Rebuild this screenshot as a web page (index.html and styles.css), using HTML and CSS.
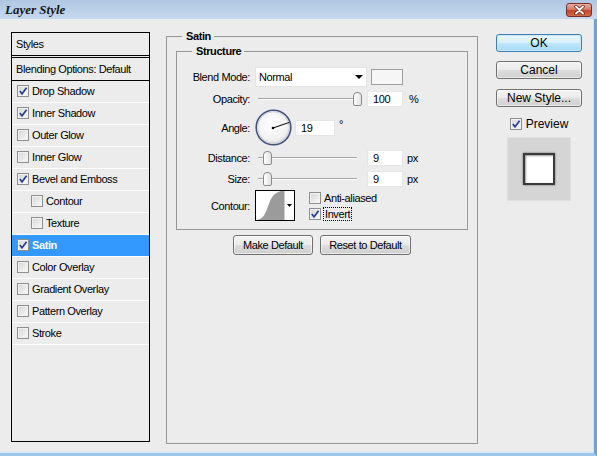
FILE: index.html
```html
<!DOCTYPE html>
<html>
<head>
<meta charset="utf-8">
<title>Layer Style</title>
<link rel="stylesheet" href="styles.css">
</head>
<body>
<div class="window">
  <div class="titlebar">
    <span class="title">Layer Style</span>
    <span class="close">
      <svg width="13" height="10" viewBox="0 0 13 10"><path d="M3 1.5 L10 8.5 M10 1.5 L3 8.5" stroke="#6b2218" stroke-width="3.4" stroke-linecap="round"/><path d="M3 1.5 L10 8.5 M10 1.5 L3 8.5" stroke="#ffffff" stroke-width="1.9" stroke-linecap="round"/></svg>
    </span>
  </div>
  <div class="body">
    <div class="styles">
      <div class="list-head">Styles</div>
      <div class="list-blend">Blending Options: Default</div>
      <div class="item"><span class="cb"><svg viewBox="0 0 10 10"><path d="M1.8 5 L4 7.8 L8.6 1.8"/></svg></span>Drop Shadow</div>
      <div class="item"><span class="cb"><svg viewBox="0 0 10 10"><path d="M1.8 5 L4 7.8 L8.6 1.8"/></svg></span>Inner Shadow</div>
      <div class="item"><span class="cb"></span>Outer Glow</div>
      <div class="item"><span class="cb"></span>Inner Glow</div>
      <div class="item"><span class="cb"><svg viewBox="0 0 10 10"><path d="M1.8 5 L4 7.8 L8.6 1.8"/></svg></span>Bevel and Emboss</div>
      <div class="item sub"><span class="cb"></span>Contour</div>
      <div class="item sub"><span class="cb"></span>Texture</div>
      <div class="item active"><span class="cb"><svg viewBox="0 0 10 10"><path d="M1.8 5 L4 7.8 L8.6 1.8"/></svg></span>Satin</div>
      <div class="item"><span class="cb"></span>Color Overlay</div>
      <div class="item"><span class="cb"></span>Gradient Overlay</div>
      <div class="item"><span class="cb"></span>Pattern Overlay</div>
      <div class="item"><span class="cb"></span>Stroke</div>
    </div>

    <div class="group satin">
      <div class="legend">Satin</div>
      <div class="group structure">
        <div class="legend">Structure</div>
        <div class="rows">
          <div class="row r-blend">
            <span class="lbl">Blend Mode:</span>
            <div class="select"><span>Normal</span><span class="arrow"></span></div>
            <span class="swatch"></span>
          </div>
          <div class="row r-opacity">
            <span class="lbl">Opacity:</span>
            <div class="slider"><span class="track"></span><span class="thumb" style="left:98px"></span></div>
            <span class="num">100</span>
            <span class="unit">%</span>
          </div>
          <div class="row r-angle">
            <span class="lbl">Angle:</span>
            <svg class="dial" width="37" height="37" viewBox="0 0 37 37">
              <defs>
                <radialGradient id="dg" cx="0.45" cy="0.4" r="0.6">
                  <stop offset="0" stop-color="#ffffff"/>
                  <stop offset="0.75" stop-color="#f1f1f1"/>
                  <stop offset="1" stop-color="#dadada"/>
                </radialGradient>
              </defs>
              <circle cx="18.5" cy="18.5" r="17.3" fill="url(#dg)" stroke="#44527a" stroke-width="1.6"/>
              <circle cx="18.5" cy="18.5" r="15.8" fill="none" stroke="#c6cddb" stroke-width="0.9"/>
              <path d="M18 19 L34 13.5" stroke="#000" stroke-width="1"/>
              <circle cx="18" cy="19" r="1.3" fill="#000"/>
            </svg>
            <span class="num wide">19</span>
            <span class="deg">°</span>
          </div>
          <div class="row r-distance">
            <span class="lbl">Distance:</span>
            <div class="slider"><span class="track"></span><span class="thumb" style="left:8px"></span></div>
            <span class="num">9</span>
            <span class="unit px">px</span>
          </div>
          <div class="row r-size">
            <span class="lbl">Size:</span>
            <div class="slider"><span class="track"></span><span class="thumb" style="left:8px"></span></div>
            <span class="num">9</span>
            <span class="unit px">px</span>
          </div>
          <div class="row r-contour">
            <span class="lbl">Contour:</span>
            <svg class="contour" width="40" height="31" viewBox="0 0 40 31">
              <rect x="0.5" y="0.5" width="39" height="30" fill="#fff" stroke="#000"/>
              <path d="M2 30 C 9 29 11 22 13.5 15 C 16 8 19 2 27 1 L29.5 1 L29.5 30 Z" fill="#9b9b9b"/>
              <path d="M32 14 L37 14 L34.5 17 Z" fill="#000"/>
            </svg>
            <div class="opts">
              <div class="opt"><span class="cb"></span>Anti-aliased</div>
              <div class="opt"><span class="cb"><svg viewBox="0 0 10 10"><path d="M1.8 5 L4 7.8 L8.6 1.8"/></svg></span><span class="focus">Invert</span></div>
            </div>
          </div>
        </div>
      </div>
      <div class="btn-row">
        <span class="btn mk">Make Default</span>
        <span class="btn rs">Reset to Default</span>
      </div>
    </div>

    <div class="side">
      <span class="btn big ok">OK</span>
      <span class="btn big cancel">Cancel</span>
      <span class="btn big newstyle">New Style...</span>
      <div class="pv"><span class="cb"><svg viewBox="0 0 10 10"><path d="M1.8 5 L4 7.8 L8.6 1.8"/></svg></span>Preview</div>
      <div class="pvbox"><div class="pvsq"></div></div>
    </div>
  </div>
</div>
</body>
</html>
```

FILE: styles.css
```css
* { box-sizing: border-box; }
html, body { margin: 0; padding: 0; }
body {
  width: 597px;
  height: 456px;
  overflow: hidden;
  background: #ececec;
  font-family: "Liberation Sans", Arial, sans-serif;
  font-size: 11px;
  letter-spacing: -0.4px;
  color: #000;
}

.window {
  width: 597px;
  height: 456px;
  display: flex;
  flex-direction: column;
  background: #ececec;
}

/* title bar */
.titlebar {
  height: 19px;
  flex: none;
  display: flex;
  align-items: center;
  justify-content: space-between;
  padding: 0 5px 0 5px;
  background: linear-gradient(#afc7e3, #c6d8ed);
}
.title {
  font-family: "Liberation Serif", "Times New Roman", serif;
  font-style: italic;
  font-weight: bold;
  font-size: 13px;
  letter-spacing: 0;
  color: #161616;
}
.close {
  width: 26px;
  height: 14px;
  border: 1px solid #7b2c22;
  border-radius: 3px;
  background: linear-gradient(#eab1a4, #d97a63 45%, #c4452d 55%, #d2694b);
  display: flex;
  align-items: center;
  justify-content: center;
}

/* body */
.body {
  flex: 1;
  display: flex;
  align-items: flex-start;
  padding-left: 11px;
  border-right: 3px solid #62a9e4;
  border-bottom: 3px solid #9cc7ea;
  box-shadow: inset -1px 0 0 #d2e3f2, inset 0 -2px 0 #dae7f3;
}

/* styles list */
.styles {
  margin-top: 13px;
  width: 139px;
  height: 410px;
  border: 1px solid #000;
  flex: none;
}
.list-head {
  height: 25px;
  border-bottom: 3px double #000;
  padding: 0 0 1px 4px;
  display: flex;
  align-items: center;
}
.list-blend {
  height: 23px;
  border-bottom: 1px solid #000;
  padding: 0 0 1px 4px;
  display: flex;
  align-items: center;
}
.item {
  height: 22px;
  border-bottom: 1px solid #fff;
  display: flex;
  align-items: center;
  padding: 0 0 1px 5px;
}
.item.sub { padding-left: 19px; }
.item .cb { margin-right: 3px; }
.item.active {
  background: #3399ff;
  color: #fff;
  font-weight: bold;
}

/* checkbox */
.cb {
  width: 12px;
  height: 12px;
  flex: none;
  border: 1px solid #8e8f8f;
  background: linear-gradient(135deg, #d6d6d6, #f9f9f9);
  box-shadow: inset 0 0 0 1px #f2f2f2;
  display: flex;
  align-items: center;
  justify-content: center;
}
.cb svg {
  width: 10px;
  height: 10px;
  fill: none;
  stroke: #26418f;
  stroke-width: 1.7;
}

/* group boxes */
.group {
  border: 1px solid #969696;
}
.legend {
  display: block;
  width: max-content;
  height: 13px;
  line-height: 13px;
  margin: -7px 0 0 15px;
  padding: 0 3px 0 4px;
  background: #ececec;
  font-weight: bold;
}
.satin {
  margin-left: 16px;
  margin-top: 17px;
  width: 312px;
  height: 408px;
  flex: none;
}
.structure {
  margin: 8px 9px 0 9px;
  padding-bottom: 8px;
}
.rows { padding-top: 9px; }

.row {
  display: flex;
  align-items: center;
}
.lbl {
  width: 73px;
  margin-right: 5px;
  text-align: right;
  flex: none;
}
.r-blend { height: 20px; }
.r-opacity { height: 16px; margin-top: 4px; }
.r-angle { height: 37px; margin-top: 2px; }
.r-distance { height: 16px; margin-top: 4px; }
.r-size { height: 16px; margin-top: 5px; }
.r-contour { height: 31px; margin-top: 3px; }

.select {
  width: 112px;
  height: 20px;
  background: #fff;
  border: 1px solid #e3e3e3;
  display: flex;
  align-items: center;
  justify-content: space-between;
  padding: 0 3px 0 3px;
}
.arrow {
  width: 0;
  height: 0;
  border-left: 4px solid transparent;
  border-right: 4px solid transparent;
  border-top: 4px solid #000;
}
.swatch {
  width: 32px;
  height: 16px;
  margin-left: 4px;
  border: 1px solid #9d9d9d;
  background: #f6f6f6;
}

.slider {
  position: relative;
  width: 107px;
  height: 16px;
  display: flex;
  align-items: center;
  padding: 0 5px 0 3px;
}
.track {
  flex: 1;
  height: 2px;
  border-top: 1px solid #a5a5a5;
  border-bottom: 1px solid #ffffff;
}
.thumb {
  position: absolute;
  top: 1px;
  width: 9px;
  height: 14px;
  border: 1px solid #8a8a8a;
  border-radius: 4px 4px 2px 2px;
  background: linear-gradient(90deg, #ffffff, #e2e2e2);
}

.num {
  width: 36px;
  height: 16px;
  margin-left: 5px;
  background: #fff;
  border: 1px solid #e6e6e6;
  padding-left: 5px;
  display: flex;
  align-items: center;
}
.num.wide { width: 40px; margin-left: 3px; }
.unit { margin-left: 6px; }
.unit.px { margin-left: 4px; }
.deg {
  align-self: flex-start;
  margin-top: 10px;
  margin-left: 4px;
  line-height: 11px;
}

.contour { flex: none; }
.opts {
  margin-left: 14px;
  display: flex;
  flex-direction: column;
}
.opt {
  height: 16px;
  display: flex;
  align-items: center;
}
.opt .cb { margin-right: 3px; }
.focus {
  outline: 1px dotted #000;
  padding: 0 1px;
  line-height: 12px;
}

/* buttons */
.btn {
  display: flex;
  align-items: center;
  justify-content: center;
  height: 20px;
  border: 1px solid #707070;
  border-radius: 3px;
  background: linear-gradient(#f3f3f3 0%, #ebebeb 48%, #dddddd 52%, #cfcfcf 100%);
  box-shadow: inset 0 0 0 1px rgba(255,255,255,0.6);
}
.btn-row {
  display: flex;
  justify-content: center;
  gap: 7px;
  margin-top: 5px;
}
.mk { width: 80px; }
.rs { width: 91px; }

.side {
  margin-left: 18px;
  margin-top: 15px;
  width: 86px;
  flex: none;
  display: flex;
  flex-direction: column;
  align-items: center;
  font-size: 12px;
  letter-spacing: 0;
}
.btn.big { width: 86px; height: 18px; }
.ok {
  border-color: #3c7fb1;
  background: linear-gradient(#eaf6fd 0%, #d9f0fc 48%, #bee6fd 52%, #a7d9f5 100%);
  box-shadow: inset 0 0 0 1px #c9e9fa;
}
.cancel { margin-top: 9px; }
.newstyle { margin-top: 10px; }
.pv {
  margin-top: 10px;
  height: 14px;
  display: flex;
  align-items: center;
  gap: 4px;
}
.pvbox {
  margin-top: 6px;
  width: 64px;
  height: 64px;
  background: #d5d5d5;
  border: 1px solid #dfdfdf;
  display: flex;
  align-items: center;
  justify-content: center;
}
.pvsq {
  width: 32px;
  height: 32px;
  background: #fff;
  border: 2px solid #3a3a3a;
  box-shadow: 0 0 2px #666, inset 1px 1px 2px #9a9a9a;
}
```
